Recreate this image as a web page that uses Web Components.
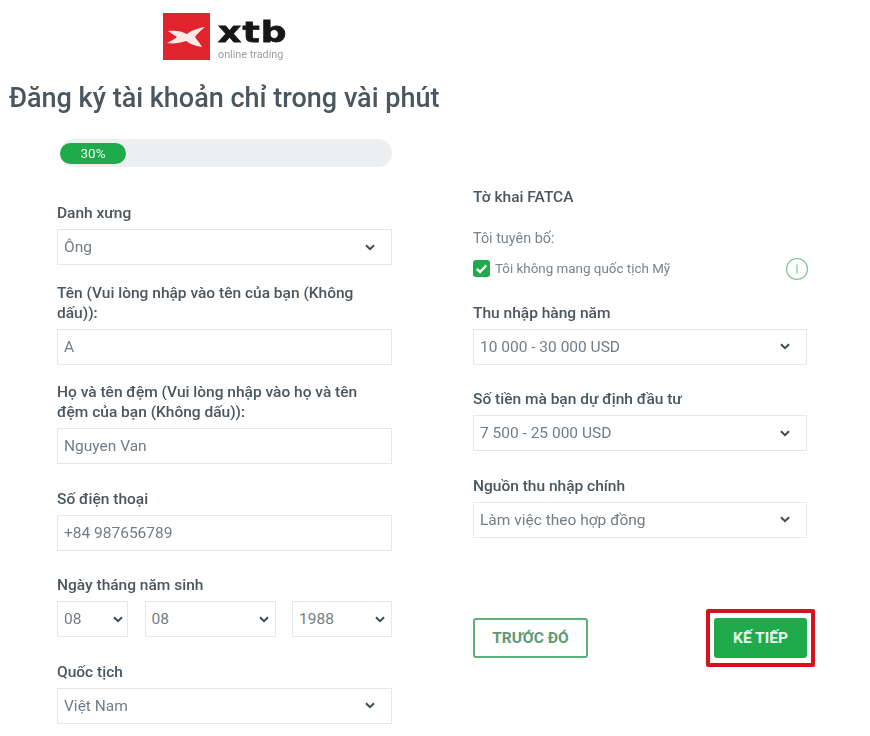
<!DOCTYPE html>
<html lang="vi">
<head>
<meta charset="utf-8">
<title>XTB</title>
<style>
  html, body { margin: 0; background: #fff; }
  body {
    font-family: Roboto, "Liberation Sans", sans-serif;
    color: #4b565f;
    height: 736px;
    overflow: hidden;
  }
</style>
</head>
<body>
<signup-page>
  <form-field first label="Danh xưng"><form-box kind="select">Ông</form-box></form-field>
  <form-field tight label="Tên (Vui lòng nhập vào tên của bạn (Không dấu)):"><form-box>A</form-box></form-field>
  <form-field tight label="Họ và tên đệm (Vui lòng nhập vào họ và tên đệm của bạn (Không dấu)):"><form-box>Nguyen Van</form-box></form-field>
  <form-field label="Số điện thoại"><form-box>+84 987656789</form-box></form-field>
  <form-field label="Ngày tháng năm sinh">
    <date-row>
      <form-box kind="select">08</form-box>
      <form-box kind="select">08</form-box>
      <form-box kind="select">1988</form-box>
    </date-row>
  </form-field>
  <form-field label="Quốc tịch"><form-box kind="select">Việt Nam</form-box></form-field>

  <fatca-block slot="right"></fatca-block>
  <form-field slot="right" label="Thu nhập hàng năm"><form-box kind="select">10 000 - 30 000 USD</form-box></form-field>
  <form-field slot="right" label="Số tiền mà bạn dự định đầu tư"><form-box kind="select">7 500 - 25 000 USD</form-box></form-field>
  <form-field slot="right" label="Nguồn thu nhập chính"><form-box kind="select">Làm việc theo hợp đồng</form-box></form-field>
  <action-row slot="right"></action-row>
</signup-page>

<script>
"use strict";

class BrandLogo extends HTMLElement {
  constructor() {
    super();
    this.attachShadow({ mode: "open" });
  }

  connectedCallback() {
    this.shadowRoot.innerHTML = `
      <style>
        :host { display: flex; gap: 8px; align-items: flex-start; }
        .mark { width: 47px; height: 47px; display: block; }
        .words { display: flex; flex-direction: column; width: 70px; }
        .name {
          font: 700 29px/30px "DejaVu Sans", sans-serif;
          color: #17171a;
          letter-spacing: 1px;
          -webkit-text-stroke: 0.8px #17171a;
          transform: scaleX(1.24);
          transform-origin: left center;
          margin-top: 4px;
          height: 30px;
        }
        .tag {
          font: 400 10.8px/12px Roboto, sans-serif;
          color: #9a9ea2;
          margin-top: 2px;
        }
      </style>
      <svg class="mark" viewBox="0 0 47 47">
        <rect width="47" height="47" fill="#e1232e"/>
        <path fill="#fbe9e6" d="M5 18 C12 17 19 18 24 21 C29 17 35 15 42 14 C37 18 34 21 32 24 C34 27 37 30 39 34 C32 33 27 31 23 28 C17 30 10 31 4 30 C8 28 12 26 14 24 C11 22 8 20 5 18 Z"/>
      </svg>
      <div class="words">
        <div class="name">xtb</div>
        <div class="tag">online trading</div>
      </div>
    `;
  }
}

class ProgressBar extends HTMLElement {
  constructor() {
    super();
    this.attachShadow({ mode: "open" });
  }

  connectedCallback() {
    this.shadowRoot.innerHTML = `
      <style>
        :host {
          display: flex;
          align-items: center;
          height: 28px;
          margin-left: 3px;
          border-radius: 14px;
          background: #eceef0;
        }
        .fill {
          width: 66px;
          height: 21px;
          border-radius: 11px;
          background: #1fab4c;
          color: #e4f6e9;
          font-size: 13.5px;
          line-height: 21px;
          text-align: center;
        }
      </style>
      <div class="fill">${this.getAttribute("value") || "0"}%</div>
    `;
  }
}

class FormField extends HTMLElement {
  constructor() {
    super();
    this.attachShadow({ mode: "open" });
  }

  connectedCallback() {
    this.shadowRoot.innerHTML = `
      <style>
        :host { display: block; margin-top: 23.5px; }
        :host([tight]) { margin-top: 16.5px; }
        :host([first]) { margin-top: 35px; }
        label {
          display: block;
          font-size: 15.5px;
          font-weight: 500;
          line-height: 20px;
          color: #4b565f;
          padding-top: 1px;
          margin-bottom: 6px;
        }
      </style>
      <label>${this.getAttribute("label")}</label>
      <slot></slot>
    `;
  }
}

class FormBox extends HTMLElement {
  constructor() {
    super();
    this.attachShadow({ mode: "open" });
  }

  connectedCallback() {
    const chevron = this.getAttribute("kind") === "select"
      ? `<svg width="10" height="7" viewBox="0 0 10 7"><path d="M1 1.2 5 5.2 9 1.2" fill="none" stroke="#3e4a52" stroke-width="2"/></svg>`
      : "";
    this.shadowRoot.innerHTML = `
      <style>
        :host {
          display: flex;
          align-items: center;
          justify-content: space-between;
          box-sizing: border-box;
          height: 36px;
          padding: 0 16px 0 6px;
          border: 1px solid #e5e8ea;
          background: #fff;
          font-size: 15.5px;
          color: #737d85;
        }
      </style>
      <slot></slot>
      ${chevron}
    `;
  }
}

class DateRow extends HTMLElement {
  constructor() {
    super();
    this.attachShadow({ mode: "open" });
  }

  connectedCallback() {
    this.shadowRoot.innerHTML = `
      <style>
        :host {
          display: grid;
          grid-template-columns: 71px 131px 100px;
          justify-content: space-between;
        }
        ::slotted(form-box) { padding-right: 6px; }
        ::slotted(form-box:first-child) { padding-right: 4px; }
      </style>
      <slot></slot>
    `;
  }
}

class FatcaBlock extends HTMLElement {
  constructor() {
    super();
    this.attachShadow({ mode: "open" });
  }

  connectedCallback() {
    this.shadowRoot.innerHTML = `
      <style>
        :host { display: block; }
        h2 {
          margin: 0;
          font-size: 15.5px;
          font-weight: 500;
          line-height: 20px;
          color: #4b565f;
        }
        .lead {
          margin-top: 22px;
          font-size: 14.4px;
          line-height: 20px;
          color: #7a848b;
        }
        .check {
          display: flex;
          align-items: center;
          gap: 5px;
          margin-top: 10px;
          height: 19px;
          font-size: 13.4px;
          color: #7a848b;
        }
        .info { margin-left: auto; margin-right: -2px; display: block; }
        .box { display: block; flex: none; }
      </style>
      <h2>Tờ khai FATCA</h2>
      <div class="lead">Tôi tuyên bố:</div>
      <div class="check">
        <svg class="box" width="17" height="17" viewBox="0 0 17 17">
          <rect width="17" height="17" rx="3" fill="#1fab4c"/>
          <path d="M3.8 8.8 7 12 13.2 5.4" fill="none" stroke="#fff" stroke-width="2.4"/>
        </svg>
        <span>Tôi không mang quốc tịch Mỹ</span>
        <svg class="info" width="24" height="24" viewBox="0 0 24 24">
          <circle cx="12" cy="12" r="10.5" fill="none" stroke="#7cc596" stroke-width="1.2"/>
          <path d="M12 7.5V16.5" stroke="#7cc596" stroke-width="1.2"/>
        </svg>
      </div>
    `;
  }
}

class ActionButton extends HTMLElement {
  constructor() {
    super();
    this.attachShadow({ mode: "open" });
  }

  connectedCallback() {
    this.shadowRoot.innerHTML = `
      <style>
        :host {
          display: flex;
          align-items: center;
          justify-content: center;
          position: relative;
          box-sizing: border-box;
          height: 40px;
          border-radius: 3px;
          font-size: 15.5px;
          font-weight: 700;
        }
        :host([variant="outline"]) {
          width: 115px;
          border: 2px solid #5bb07b;
          color: #5f9a78;
          background: #fff;
        }
        :host([variant="solid"]) {
          width: 93px;
          background: #1fab4c;
          color: #e9f8ee;
        }
        :host([marked])::after {
          content: "";
          position: absolute;
          inset: -9px -8px;
          border: 4px solid #d5121e;
          border-radius: 2px;
        }
      </style>
      <slot></slot>
    `;
  }
}

class ActionRow extends HTMLElement {
  constructor() {
    super();
    this.attachShadow({ mode: "open" });
  }

  connectedCallback() {
    this.shadowRoot.innerHTML = `
      <style>
        :host {
          display: flex;
          justify-content: space-between;
          margin-top: 80px;
        }
      </style>
      <action-button variant="outline">TRƯỚC ĐÓ</action-button>
      <action-button variant="solid" marked>KẾ TIẾP</action-button>
    `;
  }
}

class SignupPage extends HTMLElement {
  constructor() {
    super();
    this.attachShadow({ mode: "open" });
  }

  connectedCallback() {
    this.shadowRoot.innerHTML = `
      <style>
        :host {
          display: block;
          filter: blur(0.5px);
        }
        header { padding: 13px 0 0 163px; height: 59px; }
        h1 {
          margin: 0;
          padding-left: 9px;
          font-size: 27px;
          font-weight: 500;
          line-height: 32px;
          color: #4b565f;
          height: 57px;
          margin-top: 10px;
        }
        .columns {
          display: grid;
          grid-template-columns: 335px 334px;
          column-gap: 81px;
          padding-left: 57px;
        }
        .right { padding-top: 48px; }
      </style>
      <header><brand-logo></brand-logo></header>
      <h1>Đăng ký tài khoản chỉ trong vài phút</h1>
      <div class="columns">
        <div class="left">
          <progress-bar value="30"></progress-bar>
          <slot></slot>
        </div>
        <div class="right">
          <slot name="right"></slot>
        </div>
      </div>
    `;
  }
}

customElements.define("brand-logo", BrandLogo);
customElements.define("progress-bar", ProgressBar);
customElements.define("form-field", FormField);
customElements.define("form-box", FormBox);
customElements.define("date-row", DateRow);
customElements.define("fatca-block", FatcaBlock);
customElements.define("action-button", ActionButton);
customElements.define("action-row", ActionRow);
customElements.define("signup-page", SignupPage);
</script>
</body>
</html>
